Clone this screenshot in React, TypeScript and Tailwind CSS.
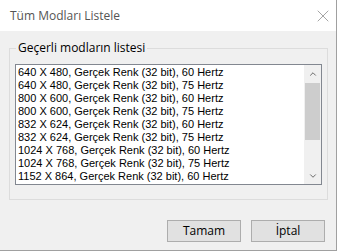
import { X, ChevronUp, ChevronDown } from 'lucide-react';

const modes = [
  '640 X 480, Gerçek Renk (32 bit), 60 Hertz',
  '640 X 480, Gerçek Renk (32 bit), 75 Hertz',
  '800 X 600, Gerçek Renk (32 bit), 60 Hertz',
  '800 X 600, Gerçek Renk (32 bit), 75 Hertz',
  '832 X 624, Gerçek Renk (32 bit), 60 Hertz',
  '832 X 624, Gerçek Renk (32 bit), 75 Hertz',
  '1024 X 768, Gerçek Renk (32 bit), 60 Hertz',
  '1024 X 768, Gerçek Renk (32 bit), 75 Hertz',
  '1152 X 864, Gerçek Renk (32 bit), 60 Hertz',
];

const App = () => {
  return (
    <div className="w-[340px] h-[252px] bg-white" style={{ fontFamily: '"Liberation Sans", Arial, sans-serif' }}>
      <div className="w-[337px] h-[251px] flex flex-col border-r border-b border-[#a0a0a0]">
        {/* Title bar */}
        <div className="h-[31px] bg-white flex items-center justify-between pl-[10px] pr-[3px]">
          <span className="text-[12px] text-[#555] font-['Open_Sans',sans-serif]">Tüm Modları Listele</span>
          <X size={20} strokeWidth={0.8} className="text-[#777]" />
        </div>

        {/* Body */}
        <div className="flex-1 bg-[#f0f0f0] flex flex-col">
          {/* Group box */}
          <div className="relative ml-[9px] mt-[17px] w-[319px] h-[152px] border border-[#dcdcdc]">
            <span className="absolute -top-[9px] left-[6px] px-[2px] bg-[#f0f0f0] text-[12px] leading-[16px] text-black font-['Open_Sans',sans-serif]">
              Geçerli modların listesi
            </span>

            {/* List box */}
            <div className="mt-[15px] ml-[5px] w-[307px] h-[121px] border border-[#828790] bg-white flex">
              <div className="flex-1 pl-[2px] pt-[1px] overflow-hidden">
                {modes.map(m => (
                  <div key={m} className="h-[13px] leading-[13px] text-[11px] text-black whitespace-nowrap">
                    {m}
                  </div>
                ))}
              </div>
              {/* Scrollbar */}
              <div className="w-[17px] bg-[#f0f0f0] flex flex-col">
                <div className="h-[17px] flex items-center justify-center">
                  <ChevronUp size={10} strokeWidth={2} className="text-[#505050]" />
                </div>
                <div className="flex-1 px-[1px]">
                  <div className="h-[57px] mt-[1px] bg-[#cdcdcd]" />
                </div>
                <div className="h-[17px] flex items-center justify-center">
                  <ChevronDown size={10} strokeWidth={2} className="text-[#505050]" />
                </div>
              </div>
            </div>
          </div>

          {/* Buttons */}
          <div className="flex justify-end gap-[10px] mt-[20px] pr-[11px]">
            <button className="w-[74px] h-[22px] bg-[#e1e1e1] border border-[#adadad] text-[12px] text-black font-['Open_Sans',sans-serif]">
              Tamam
            </button>
            <button className="w-[74px] h-[22px] bg-[#e1e1e1] border border-[#adadad] text-[12px] text-black font-['Open_Sans',sans-serif]">
              İptal
            </button>
          </div>
        </div>
      </div>
    </div>
  );
};

export default App;
